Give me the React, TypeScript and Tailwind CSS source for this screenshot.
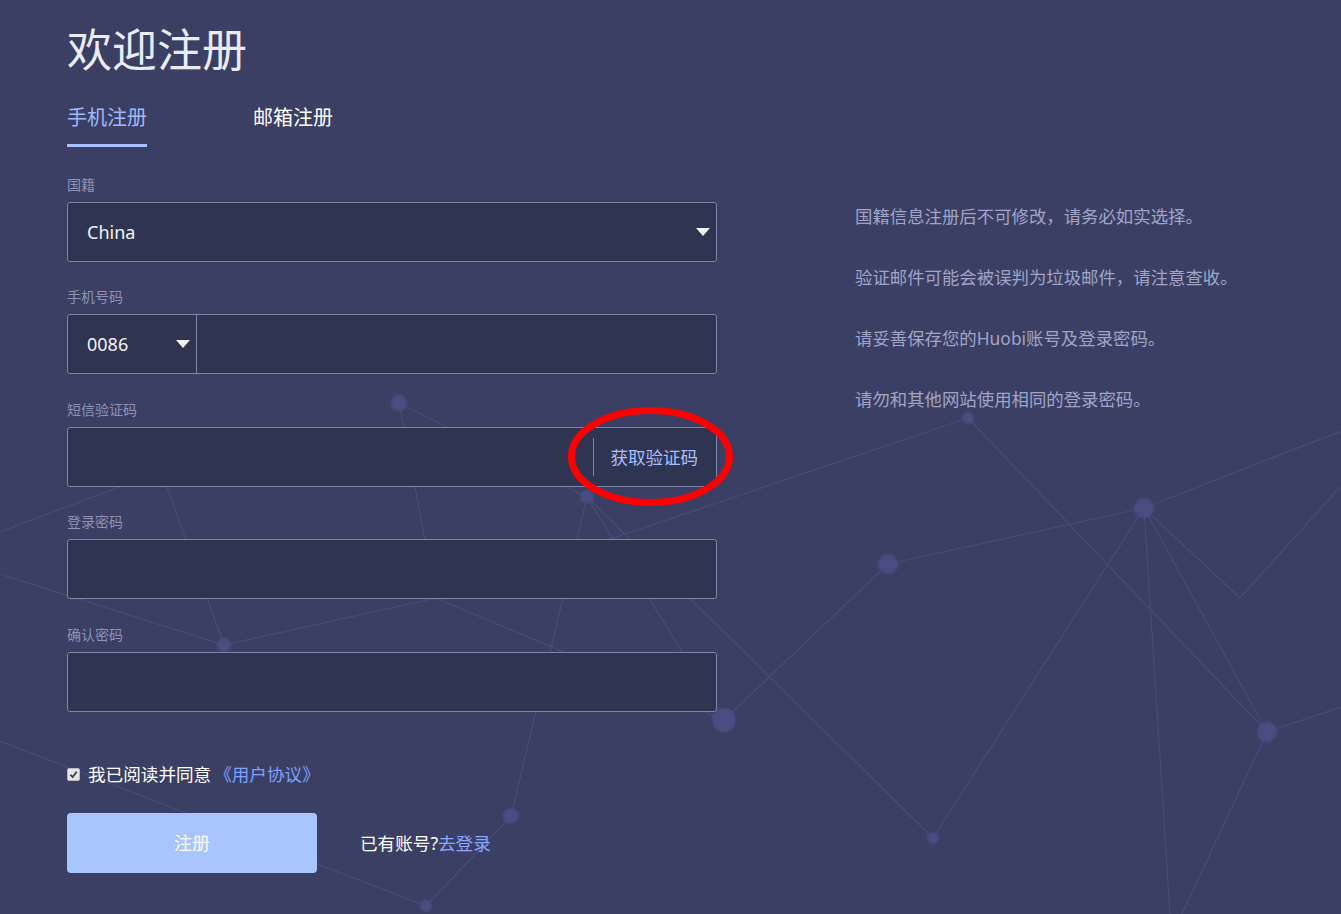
import React from "react";

const FONT = '"Noto Sans", "Noto Sans CJK SC", sans-serif';

const nodes: [number, number, number][] = [
  [399, 403, 8],
  [587, 497, 7],
  [968, 418, 6],
  [1144, 508, 10],
  [888, 564, 10],
  [224, 645, 7],
  [724, 720, 12],
  [1267, 732, 10],
  [511, 816, 8],
  [933, 838, 6],
  [426, 906, 6],
];

const lines: [number, number, number, number][] = [
  [399, 403, 587, 497],
  [399, 403, 436, 598],
  [436, 598, 968, 418],
  [224, 645, 436, 598],
  [436, 598, 724, 720],
  [587, 497, 511, 816],
  [587, 497, 724, 720],
  [587, 497, 933, 838],
  [511, 816, 426, 906],
  [0, 741, 426, 906],
  [888, 564, 1144, 508],
  [888, 564, 724, 720],
  [968, 418, 1267, 732],
  [1144, 508, 1267, 732],
  [1144, 508, 1240, 598],
  [1240, 598, 1341, 486],
  [1144, 508, 1341, 431],
  [1144, 508, 933, 838],
  [1144, 508, 1170, 914],
  [1267, 732, 1182, 914],
  [1267, 732, 1341, 707],
  [0, 574, 224, 645],
  [150, 440, 224, 645],
  [0, 532, 165, 470],
];

function Caret() {
  return (
    <svg width="14" height="8" viewBox="0 0 14 8" className="shrink-0">
      <path d="M0 0 L14 0 L7 8 Z" fill="#f2f2f8" />
    </svg>
  );
}

function Label({ children }: { children: React.ReactNode }) {
  return <div className="text-[14px] leading-[20px] text-[#8d92b5] mb-[7px]">{children}</div>;
}

const boxCls =
  "h-[60px] w-full rounded-[3px] border border-[#7d83aa] bg-[#2f3450] flex items-center";

export default function App() {
  return (
    <div
      className="relative w-full h-[914px] overflow-hidden bg-[#3a3f63]"
      style={{ fontFamily: FONT }}
    >
      <svg className="absolute inset-0" width="1341" height="914" viewBox="0 0 1341 914">
        <defs>
          <filter id="soft" x="-50%" y="-50%" width="200%" height="200%">
            <feGaussianBlur stdDeviation="1" />
          </filter>
        </defs>
        {lines.map(([x1, y1, x2, y2], i) => (
          <line key={i} x1={x1} y1={y1} x2={x2} y2={y2} stroke="#464c7a" strokeWidth="1.2" />
        ))}
        {nodes.map(([cx, cy, r], i) => (
          <circle key={i} cx={cx} cy={cy} r={r} fill="#484e82" filter="url(#soft)" />
        ))}
      </svg>

      <div className="relative flex items-start pl-[67px]">
        <div className="w-[650px] pt-[26px]">
          <h1 className="text-[45px] leading-[48px] text-[#ebebf5] font-normal">欢迎注册</h1>

          <div className="flex mt-[30px] items-end">
            <div className="text-[20px] leading-[28px] text-[#a0b8ff] pb-[12px] border-b-[3px] border-[#a8c0ff]">
              手机注册
            </div>
            <div className="text-[20px] leading-[28px] text-white pb-[15px] ml-[106px]">邮箱注册</div>
          </div>

          <div className="mt-[28px]">
            <Label>国籍</Label>
            <div className={boxCls + " justify-between pl-[19px] pr-[6px]"}>
              <span className="text-[18px] text-[#f2f2f8]">China</span>
              <Caret />
            </div>
          </div>

          <div className="mt-[25px]">
            <Label>手机号码</Label>
            <div className={boxCls}>
              <div className="h-full w-[129px] shrink-0 flex items-center justify-between pl-[19px] pr-[6px] border-r border-[#7d83aa]">
                <span className="text-[18px] text-[#f2f2f8]">0086</span>
                <Caret />
              </div>
              <div className="flex-1" />
            </div>
          </div>

          <div className="mt-[26px]">
            <Label>短信验证码</Label>
            <div className={boxCls}>
              <div className="flex-1" />
              <div className="h-[38px] border-l border-[#7d83aa]" />
              <div className="pl-[17px] pr-[18px] text-[17.5px] text-[#a8bfff] leading-[24px]">获取验证码</div>
            </div>
          </div>

          <div className="mt-[25px]">
            <Label>登录密码</Label>
            <div className={boxCls} />
          </div>

          <div className="mt-[26px]">
            <Label>确认密码</Label>
            <div className={boxCls} />
          </div>

          <div className="mt-[50px] flex items-center h-[24px]">
            <div className="w-[13px] h-[13px] rounded-[2px] bg-[#e6e6ea] border border-[#b8b8c0] flex items-center justify-center">
              <svg width="9" height="9" viewBox="0 0 10 10">
                <path d="M1.5 5.2 L4 7.8 L8.6 1.8" fill="none" stroke="#444" strokeWidth="2" />
              </svg>
            </div>
            <span className="ml-[8px] text-[17.6px] text-white">我已阅读并同意</span>
            <span className="ml-[3px] text-[17.6px] text-[#7fa1ff]">《用户协议》</span>
          </div>

          <div className="mt-[27px] flex items-center">
            <div className="w-[250px] h-[60px] rounded-[4px] bg-[#a9c5fd] flex items-center justify-center text-[18px] text-white">
              注册
            </div>
            <div className="ml-[43px] text-[17.6px] text-white">
              已有账号?<span className="text-[#8aa8ff]">去登录</span>
            </div>
          </div>
        </div>

        <div className="ml-[138px] mt-[204px] flex flex-col gap-[37px] text-[17.4px] leading-[24px] text-[#a0a5c8]">
          <div>国籍信息注册后不可修改，请务必如实选择。</div>
          <div>验证邮件可能会被误判为垃圾邮件，请注意查收。</div>
          <div>请妥善保存您的Huobi账号及登录密码。</div>
          <div>请勿和其他网站使用相同的登录密码。</div>
        </div>
      </div>

      <svg
        className="absolute pointer-events-none"
        style={{ left: 564, top: 403 }}
        width="176"
        height="108"
        viewBox="0 0 176 108"
      >
        <ellipse cx="86.5" cy="53.5" rx="79" ry="46" fill="none" stroke="#ff0000" strokeWidth="7" />
      </svg>
    </div>
  );
}
